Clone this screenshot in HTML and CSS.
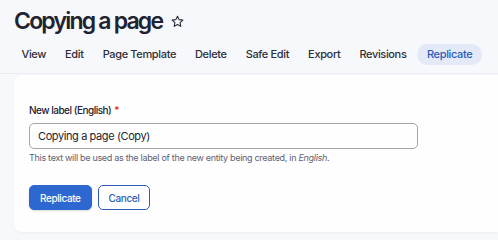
FILE: index.html
```html
<!DOCTYPE html>
<html lang="en">
<head>
<meta charset="utf-8">
<link rel="stylesheet" href="styles.css">
</head>
<body>
<div class="header">
  <h1 class="title">Copying a page
    <svg class="star" viewBox="0 0 20 20" width="13" height="13"><path d="M10 1.8l2.5 5.3 5.7.7-4.2 4 1.1 5.7L10 14.7l-5.1 2.8 1.1-5.7-4.2-4 5.7-.7z" fill="none" stroke="#222330" stroke-width="1.6" stroke-linejoin="round"/></svg>
  </h1>
  <nav class="tabs">
    <a class="tab">View</a>
    <a class="tab">Edit</a>
    <a class="tab">Page Template</a>
    <a class="tab">Delete</a>
    <a class="tab">Safe Edit</a>
    <a class="tab">Export</a>
    <a class="tab">Revisions</a>
    <a class="tab active">Replicate</a>
  </nav>
</div>
<div class="card">
  <label class="label">New label (English)<span class="req">*</span></label>
  <div class="input">Copying a page (Copy)</div>
  <div class="desc">This text will be used as the label of the new entity being created, in <em>English</em>.</div>
  <div class="actions">
    <button class="btn primary">Replicate</button>
    <button class="btn secondary">Cancel</button>
  </div>
</div>
</body>
</html>
```
FILE: styles.css
```css
html, body {
  margin: 0;
  padding: 0;
}
body {
  background: #f7f8fb;
  font-family: Inter, "Noto Sans", sans-serif;
  color: #222330;
  width: 498px;
  height: 240px;
  overflow: hidden;
}
.header {
  padding: 3px 0 0 14px;
  border-bottom: 1px solid #ebecf0;
  height: 74px;
  box-sizing: border-box;
}
.title {
  margin: 0;
  font-size: 23px;
  font-weight: 600;
  letter-spacing: -1.8px;
  line-height: 36px;
  display: flex;
  align-items: center;
  gap: 9px;
}
.star {
  margin-top: 1px;
}
.tabs {
  display: flex;
  margin-top: 5px;
  margin-left: -2px;
  white-space: nowrap;
}
.tab {
  font-size: 11px;
  font-weight: 500;
  color: #2d2f3a;
  padding: 3px 9.5px;
  border-radius: 11px;
  line-height: 15px;
  letter-spacing: -0.35px;
}
.active {
  background: #e3e9f6;
  color: #2d5cb6;
  padding: 3px 10px;
  margin-left: 1px;
}
.card {
  margin: 1px 0 0 14px;
  background: #fefefe;
  border-radius: 8px 0 0 8px;
  box-shadow: 0 1px 3px rgba(0,0,0,0.04);
  height: 157px;
  box-sizing: border-box;
  padding: 28px 16px 0 15px;
}
.label {
  display: block;
  font-size: 10px;
  font-weight: 500;
  color: #222330;
  line-height: 14px;
  letter-spacing: -0.5px;
}
.req {
  color: #d72222;
  margin-left: 3px;
}
.input {
  margin-top: 6px;
  width: 389px;
  height: 26px;
  box-sizing: border-box;
  border: 1px solid #a3a6ae;
  border-radius: 5px;
  font-size: 11px;
  letter-spacing: -0.4px;
  line-height: 24px;
  padding-left: 8px;
  color: #222330;
}
.desc {
  font-size: 9px;
  letter-spacing: -0.3px;
  color: #5e6170;
  margin-top: 3px;
  line-height: 12px;
}
.actions {
  display: flex;
  gap: 6px;
  margin-top: 21px;
}
.btn {
  font-family: Inter, "Noto Sans", sans-serif;
  font-size: 10px;
  letter-spacing: -0.4px;
  font-weight: 500;
  height: 25px;
  border-radius: 5px;
  padding: 0 10px;
  cursor: pointer;
}
.primary {
  background: #2d68d1;
  color: #fff;
  border: 1px solid #2d68d1;
  box-shadow: 0 1px 2px rgba(0,0,0,0.15);
}
.secondary {
  background: #fff;
  color: #2d5cb6;
  border: 1px solid #2d5cb6;
}
```
